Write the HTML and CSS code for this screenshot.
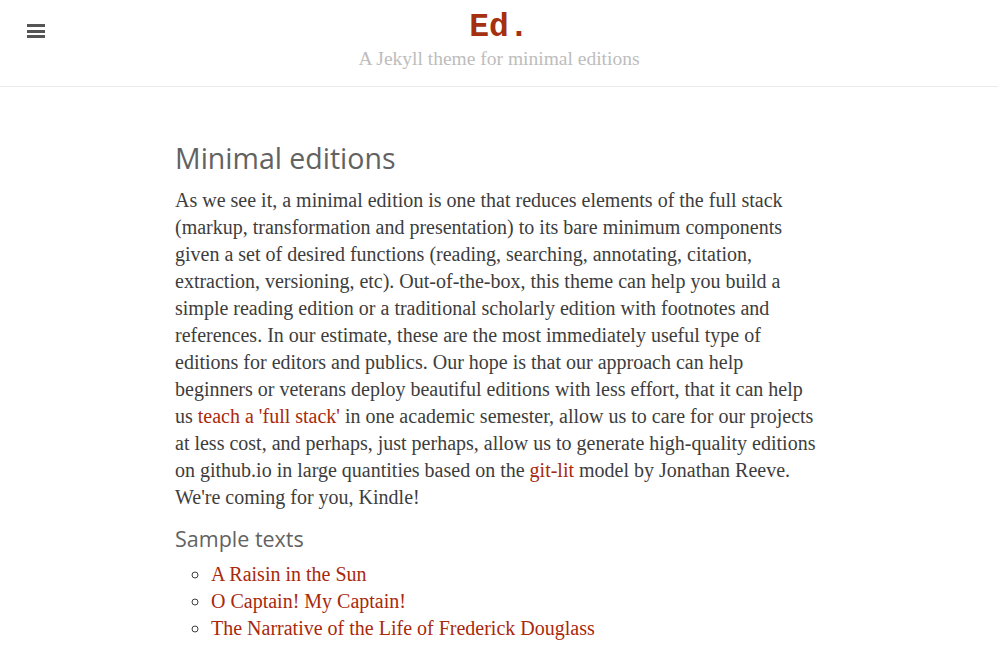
FILE: index.html
```html
<!DOCTYPE html>
<html>
<head>
<meta charset="utf-8">
<link rel="stylesheet" href="styles.css">
</head>
<body>
<header class="masthead">
  <button class="menu-btn" aria-label="Menu">
    <span></span><span></span><span></span>
  </button>
  <div class="brand">
    <a class="site-title" href="#">Ed.</a>
    <p class="tagline">A Jekyll theme for minimal editions</p>
  </div>
</header>
<main class="content">
  <h2 class="title">Minimal editions</h2>
  <p class="lead">As we see it, a minimal edition is one that reduces elements of the full stack (markup, transformation and presentation) to its bare minimum components given a set of desired functions (reading, searching, annotating, citation, extraction, versioning, etc). Out-of-the-box, this theme can help you build a simple reading edition or a traditional scholarly edition with footnotes and references. In our estimate, these are the most immediately useful type of editions for editors and publics. Our hope is that our approach can help beginners or veterans deploy beautiful editions with less effort, that it can help us <a href="#">teach a 'full stack'</a> in one academic semester, allow us to care for our projects at less cost, and perhaps, just perhaps, allow us to generate high-quality editions on github.io in large quantities based on the <a href="#">git-lit</a> model by Jonathan Reeve. We're coming for you, Kindle!</p>
  <h3 class="subtitle">Sample texts</h3>
  <ul class="texts">
    <li><a href="#">A Raisin in the Sun</a></li>
    <li><a href="#">O Captain! My Captain!</a></li>
    <li><a href="#">The Narrative of the Life of Frederick Douglass</a></li>
  </ul>
</main>
</body>
</html>
```
FILE: styles.css
```css
html, body { margin: 0; padding: 0; background: #fff; }
body {
  font-family: "Liberation Serif", serif;
  color: #3d3d3d;
  font-size: 20px;
  line-height: 27px;
}
a { color: #a8290d; text-decoration: none; }
.masthead {
  position: relative;
  height: 86px;
  border-bottom: 1px solid #eaeaea;
  display: flex;
  justify-content: center;
}
.menu-btn {
  position: absolute;
  left: 27px;
  top: 24px;
  width: 18px;
  height: 14px;
  padding: 0;
  border: 0;
  background: none;
  display: flex;
  flex-direction: column;
  justify-content: space-between;
}
.menu-btn span { display: block; height: 3px; background: #555; }
.brand { text-align: center; padding-top: 8px; }
.site-title {
  font-family: "Liberation Mono", monospace;
  font-weight: bold;
  font-size: 33px;
  line-height: 40px;
  color: #a5300f;
  display: block;
}
.tagline {
  margin: 0;
  color: #bdbdbd;
  font-size: 19.5px;
  line-height: 22px;
}
.content {
  max-width: 648px;
  margin: 0 auto;
  padding-top: 54px;
}
.title {
  font-family: "Open Sans", "DejaVu Sans", sans-serif;
  font-weight: normal;
  color: #626262;
  font-size: 28.5px;
  line-height: 34px;
  margin: 0 0 12px;
}
.lead { margin: 0 0 14px; }
.subtitle {
  font-family: "Open Sans", "DejaVu Sans", sans-serif;
  font-weight: normal;
  color: #626262;
  font-size: 21.5px;
  line-height: 28px;
  margin: 0 0 8px;
}
.texts { list-style: circle; margin: 0; padding-left: 36px; }
```
